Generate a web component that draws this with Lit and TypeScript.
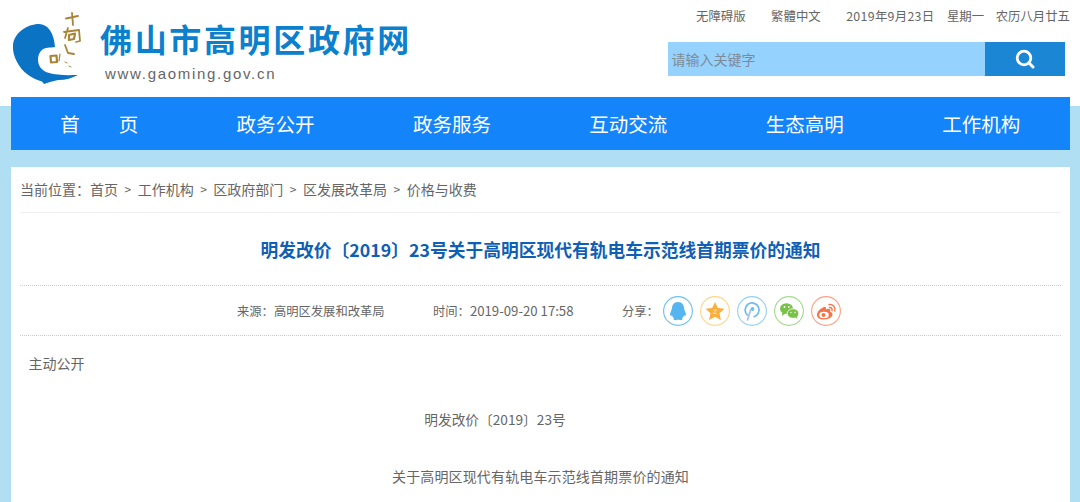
import { LitElement, html, css, svg } from "lit";
import { customElement } from "lit/decorators.js";

const navItems = ["首　　页", "政务公开", "政务服务", "互动交流", "生态高明", "工作机构"];
const crumbs = ["首页", "工作机构", "区政府部门", "区发展改革局", "价格与收费"];

const logo = svg`<svg class="logo" width="80" height="90" viewBox="11 0 80 90">
  <path fill="#0b73c4" d="M13 45C14 33 27 24 39 24C48 24 54 33 55 47C50 48 45 47 42 50C38 53 37 60 39 65C42 72 50 74 58 74.500C65 75.500 72 75 78 75C72 78 66 80 58 80L50 82L44 84L42 81.500C32 79 22 72 17 62C14 56 12.500 51 13 45Z"/>
  <g fill="none" stroke="#a98437" stroke-width="1.800" stroke-linecap="round" stroke-linejoin="round">
    <path d="M72 13L73 25M66 18.500L78 16"/>
    <path d="M64 32L79 30L80 41L76 42M68 28L65 38"/>
    <path d="M69 35L75 33.500L74 39L69 40Z" stroke-width="2.200"/>
    <path d="M65 45L68 53L74 54"/>
    <path d="M50.500 56L51 62.500L57 62L56.500 55.500Z" stroke-width="2.200"/>
    <path d="M60 54L59 61" stroke-width="1.200"/>
    <path d="M65 62L67 63M69 66L71 67" stroke-width="1"/>
  </g>
</svg>`;

const icons = [
  { c: "#6cc0f0", g: svg`<path fill="#55b5ee" d="M15 6C10.500 6 9 9.500 8.800 13L7.200 17.500C6.800 19.800 7.800 20.500 9 19.300C9.500 20.800 10.300 21.800 11 22.300C9.800 23.500 11 24.500 13 24C14.500 23.600 15.500 23.600 17 24C19 24.500 20.200 23.500 19 22.300C19.700 21.800 20.500 20.800 21 19.300C22.200 20.500 23.200 19.800 22.800 17.500L21.200 13C21 9.500 19.500 6 15 6Z"/>` },
  { c: "#fdd58a", g: svg`<path fill="#fbae3c" d="M15 6L17.800 12L24.500 12.800L19.500 17.300L20.900 24L15 20.700L9.100 24L10.500 17.300L5.500 12.800L12.200 12Z"/><path fill="none" stroke="#fde3a8" stroke-width="1" d="M13.300 14L16.700 13.800L13.300 17.500L16.900 17.300"/>` },
  { c: "#94cff4", g: svg`<path fill="none" stroke="#6dbcec" stroke-width="1.700" d="M10.800 19.500A7 7 0 1 1 16.500 20.800"/><circle cx="15.500" cy="13" r="1.900" fill="#6dbcec"/><path fill="none" stroke="#a5bfec" stroke-width="1.700" stroke-linecap="round" d="M13.800 13.500L10.500 24"/>` },
  { c: "#a3da8b", g: svg`<ellipse cx="12.500" cy="12.500" rx="6.500" ry="5.300" fill="#78c247"/><path fill="#78c247" d="M8.500 16L8 20L12 17Z"/><ellipse cx="19" cy="17.500" rx="5.800" ry="4.800" fill="#78c247" stroke="#fff" stroke-width=".8"/><path fill="#78c247" d="M21 21L23.500 23L22.800 19.500Z"/><circle cx="10.500" cy="11" r=".9" fill="#fff"/><circle cx="14.800" cy="11" r=".9" fill="#fff"/><circle cx="17" cy="16.500" r=".7" fill="#fff"/><circle cx="21" cy="16.500" r=".7" fill="#fff"/>` },
  { c: "#fca083", g: svg`<path fill="#f47547" d="M13 11C9 12.500 5.500 16 6 19.500C6.500 22.500 10 24 14 23.500C18.500 23 22 20.500 21.500 18C21 16.200 19.500 16 19 15.500C19.800 13.800 19 12.800 17.500 12.800C16.500 12.800 15.500 13.200 15 13.500C15.300 11.500 14.500 10.500 13 11Z"/><ellipse cx="13" cy="19" rx="4.800" ry="3.300" fill="#fff"/><circle cx="12.500" cy="19" r="2" fill="#f47547"/><path fill="none" stroke="#f47547" stroke-width="1.400" stroke-linecap="round" d="M18 8.500C21.500 8 25 11 23.800 15M18.500 11.500C20.300 11.300 21.500 12.700 21 14.500"/>` },
];

@customElement("app-root")
export class AppRoot extends LitElement {
  static styles = css`
    :host {
      display: block;
      width: 1080px;
      height: 502px;
      overflow: hidden;
      background: linear-gradient(#fff 106px, #b0dff3 106px);
      font-family: "Noto Sans CJK SC", "Liberation Sans", sans-serif;
      color: #555;
    }
    .wrap { width: 1059px; margin-left: 11px; }
    .header { height: 97px; display: flex; justify-content: space-between; background: #fff; }
    .brand { display: flex; }
    .logo { flex: none; }
    .brand-text { margin-left: 9px; padding-top: 16px; }
    .site {
      font-size: 32px; line-height: 44px; font-weight: 700; color: #0b80cc;
      letter-spacing: 2.650px; white-space: nowrap;
    }
    .url {
      font-family: "Liberation Sans", sans-serif;
      font-size: 15px; line-height: 20px; letter-spacing: 1.700px; color: #666; margin: 4px 0 0 5px;
    }
    .tools { width: 397px; margin-right: 5px; }
    .top { display: flex; justify-content: flex-end; font-size: 12.400px; line-height: 16px; padding-top: 8px; margin-right: -5px; white-space: nowrap; color: #666; }
    .top span { margin-left: 12.500px; }
    .top .lunar { margin-left: 11.500px; }
    .top .link { margin-left: 0; margin-right: 25.500px; }
    .top .date { margin-left: 0; letter-spacing: .3px; }
    .search { display: flex; height: 34px; margin-top: 18px; }
    .input { flex: 1; background: #96d2fe; color: #7d8b97; font-size: 14px; line-height: 34px; padding-left: 3.500px; }
    .btn { width: 80px; background: #1b87d4; display: flex; align-items: center; justify-content: center; }
    .nav { height: 53px; background: #1384fa; display: grid; grid-template-columns: repeat(6, 176.400px); }
    .nav div { color: #fff; font-size: 19.500px; line-height: 53px; text-align: center; white-space: nowrap; }
    .card { margin-top: 17px; background: #fff; height: 400px; padding: 0 9px; }
    .crumbs { height: 45px; line-height: 44px; font-size: 14px; border-bottom: 1px solid #eee; display: flex; white-space: nowrap; color: #666; }
    .crumbs i { font-style: normal; margin: 0 6.500px; font-size: 12px; }
    h1 { margin: 0; height: 72px; line-height: 72px; text-align: center; font-size: 17.750px; font-weight: 700; color: #0f5fb5; border-bottom: 1px dotted #ccc; white-space: nowrap; }
    .meta { height: 49px; border-bottom: 1px dotted #ccc; display: flex; align-items: center; font-size: 12.300px; color: #666; white-space: nowrap; }
    .src { margin-left: 217px; width: 196px; }
    .time { width: 189px; }
    .num { font-size: 13.200px; }
    .share { display: flex; align-items: center; }
    .share b { font-weight: 400; margin-right: 4px; }
    .share svg { margin-right: 7px; display: block; }
    .body { font-size: 14px; color: #666; }
    .body p { margin: 0; white-space: nowrap; }
    .open { padding: 17px 0 0 8.500px; line-height: 21px; }
    .c { text-align: center; line-height: 21px; }
    .no { margin-top: 35px !important; font-size: 13.700px; padding-right: 91px; }
    .name { margin-top: 36px !important; letter-spacing: .14px; }
  `;

  render() {
    return html`<div class="wrap">
      <header class="header">
        <div class="brand">
          ${logo}
          <div class="brand-text">
            <div class="site">佛山市高明区政府网</div>
            <div class="url">www.gaoming.gov.cn</div>
          </div>
        </div>
        <div class="tools">
          <div class="top">
            <span class="link">无障碍版</span><span class="link">繁體中文</span>
            <span class="date">2019年9月23日</span><span>星期一</span><span class="lunar">农历八月廿五</span>
          </div>
          <div class="search">
            <div class="input">请输入关键字</div>
            <div class="btn">
              <svg width="20" height="20" viewBox="0 0 20 20"><circle cx="9" cy="9" r="6.800" fill="none" stroke="#fff" stroke-width="2.800"/><path d="M14 14L18 18" stroke="#fff" stroke-width="3" stroke-linecap="round"/></svg>
            </div>
          </div>
        </div>
      </header>
      <nav class="nav">${navItems.map((n) => html`<div>${n}</div>`)}</nav>
      <main class="card">
        <div class="crumbs">当前位置：${crumbs.map((c, i) => html`${i ? html`<i>&gt;</i>` : ""}${c}`)}</div>
        <h1>明发改价〔2019〕23号关于高明区现代有轨电车示范线首期票价的通知</h1>
        <div class="meta">
          <span class="src">来源：高明区发展和改革局</span>
          <span class="time">时间：<span class="num">2019-09-20 17:58</span></span>
          <div class="share">
            <b>分享：</b>
            ${icons.map((ic) => svg`<svg width="30" height="30" viewBox="0 0 30 30"><circle cx="15" cy="15" r="14.400" fill="#fff" stroke="${ic.c}" stroke-width="1.100"/>${ic.g}</svg>`)}
          </div>
        </div>
        <div class="body">
          <p class="open">主动公开</p>
          <p class="c no">明发改价〔2019〕23号</p>
          <p class="c name">关于高明区现代有轨电车示范线首期票价的通知</p>
        </div>
      </main>
    </div>`;
  }
}
